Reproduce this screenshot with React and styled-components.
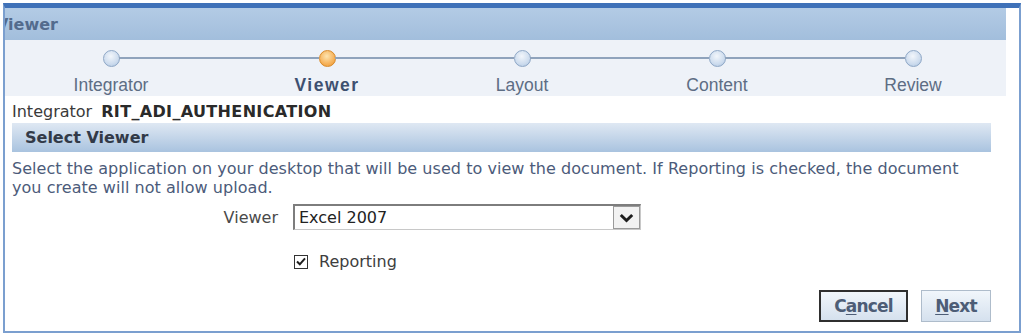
import React from "react";
import styled, { createGlobalStyle } from "styled-components";

const GlobalStyle = createGlobalStyle`
  html, body { margin: 0; padding: 0; background: #ffffff; }
  body { font-family: "DejaVu Sans", Verdana, sans-serif; }
  * { box-sizing: border-box; }
`;

// -------------------- FRAME --------------------
const Frame = styled.div`
  margin: 3px 0 0 3px;
  width: 1018px;
  height: 330px;
  border-left: 2px solid #7b9fcf;
  border-right: 2px solid #7b9fcf;
  border-bottom: 2px solid #7b9fcf;
  border-top: 5px solid #3f71b8;
  display: flex;
  flex-direction: column;
`;

const Header = styled.div`
  height: 32px;
  margin-right: 13px;
  background: linear-gradient(#b3cbe5, #a2bedc);
  overflow: hidden;
  display: flex;
  align-items: center;
`;

const HeaderTitle = styled.span`
  margin-left: -9px;
  font-family: "DejaVu Sans", Verdana, sans-serif;
  font-weight: bold;
  font-size: 16px;
  color: #536b8d;
`;

// -------------------- TRAIN --------------------
const Train = styled.div`
  height: 56px;
  margin-right: 13px;
  background: #eef2f8;
  display: flex;
  align-items: flex-start;
  padding: 10px 0 0 98px;
`;

const Step = styled.div`
  width: 16px;
  flex-shrink: 0;
  display: flex;
  flex-direction: column;
  align-items: center;
`;

const Dot = styled.span`
  width: 17px;
  height: 17px;
  border-radius: 50%;
  border: 1px solid ${(p) => (p.$active ? "#d88a2a" : "#8ea7c6")};
  background: ${(p) =>
    p.$active
      ? "radial-gradient(circle at 45% 35%, #fde4b0, #f6b25a 60%, #e9952f)"
      : "radial-gradient(circle at 45% 35%, #f2f6fb, #cddcee 60%, #aac2de)"};
`;

const StepLabel = styled.span`
  margin-top: 8px;
  white-space: nowrap;
  font-family: "Liberation Sans", Arial, sans-serif;
  font-size: 17.5px;
  line-height: 20px;
  color: ${(p) => (p.$active ? "#3d5070" : "#5d6d84")};
  font-weight: ${(p) => (p.$active ? "bold" : "normal")};
  letter-spacing: ${(p) => (p.$active ? "1.5px" : "0")};
`;

const Connector = styled.span`
  flex-shrink: 0;
  width: ${(p) => p.$w}px;
  height: 2px;
  margin-top: 7px;
  background: #8fa3bc;
`;

// -------------------- CONTENT --------------------
const Content = styled.div`
  padding: 0 28px 0 7px;
  display: flex;
  flex-direction: column;
`;

const InfoRow = styled.div`
  margin-top: 4px;
  height: 22px;
  display: flex;
  align-items: center;
  gap: 9px;
  font-size: 16px;
  color: #3a3a3a;
`;

const InfoValue = styled.b`
  color: #2a2a2a;
  letter-spacing: 0.35px;
`;

const SectionBar = styled.div`
  margin-top: 1px;
  height: 29px;
  background: linear-gradient(#dfe8f3, #a9c3df);
  display: flex;
  align-items: center;
  padding-left: 13px;
  font-weight: bold;
  font-size: 16px;
  color: #323a48;
`;

const Description = styled.p`
  margin: 7px 0 0;
  width: 960px;
  font-size: 16px;
  letter-spacing: 0.04px;
  line-height: 19px;
  color: #4c5b7a;
`;

const FieldRow = styled.div`
  margin-top: 7px;
  display: flex;
  align-items: center;
`;

const FieldLabel = styled.span`
  width: 281px;
  padding-right: 15px;
  text-align: right;
  font-size: 16px;
  color: #4a4a4a;
`;

const SelectBox = styled.div`
  width: 348px;
  height: 26px;
  display: flex;
  border-top: 2px solid #7d7d7d;
  border-left: 2px solid #7d7d7d;
  border-right: 1px solid #c8c8c8;
  border-bottom: 1px solid #c8c8c8;
  background: #ffffff;
`;

const SelectValue = styled.span`
  flex: 1;
  padding-left: 4px;
  display: flex;
  align-items: center;
  font-size: 16px;
  color: #222;
`;

const SelectButton = styled.span`
  width: 27px;
  display: flex;
  align-items: center;
  justify-content: center;
  background: #f2f2f2;
  border: 1px solid #9a9a9a;
`;

const CheckRow = styled.label`
  margin-top: 22px;
  margin-left: 282px;
  display: flex;
  align-items: center;
  gap: 11px;
  font-size: 16px;
  color: #3e3e3e;
`;

const CheckBox = styled.span`
  width: 14px;
  height: 14px;
  border: 1px solid #333;
  background: #fff;
  display: flex;
  align-items: center;
  justify-content: center;
`;

const ButtonRow = styled.div`
  margin-top: 19px;
  display: flex;
  justify-content: flex-end;
  gap: 13px;
`;

const Button = styled.button`
  height: 32px;
  width: ${(p) => p.$w}px;
  padding: 0;
  border: ${(p) => (p.$focused ? "2px solid #2f2f2f" : "1px solid #aebccb")};
  background: linear-gradient(#f1f6fb, #d5e1ee);
  font-family: "DejaVu Sans", Verdana, sans-serif;
  font-weight: bold;
  font-size: 17px;
  letter-spacing: -0.8px;
  color: #4d5d76;
  cursor: pointer;

  u { text-decoration-thickness: 1px; text-underline-offset: 2px; }
`;

const steps = [
  { label: "Integrator" },
  { label: "Viewer", active: true },
  { label: "Layout" },
  { label: "Content" },
  { label: "Review" },
];
const gaps = [200, 179, 179, 180];

export default function App() {
  return (
    <>
      <GlobalStyle />
      <Frame>
        <Header>
          <HeaderTitle>Viewer</HeaderTitle>
        </Header>

        <Train>
          {steps.map((s, i) => (
            <React.Fragment key={s.label}>
              <Step>
                <Dot $active={s.active} />
                <StepLabel $active={s.active}>{s.label}</StepLabel>
              </Step>
              {i < gaps.length && <Connector $w={gaps[i]} />}
            </React.Fragment>
          ))}
        </Train>

        <Content>
          <InfoRow>
            Integrator <InfoValue>RIT_ADI_AUTHENICATION</InfoValue>
          </InfoRow>

          <SectionBar>Select Viewer</SectionBar>

          <Description>
            Select the application on your desktop that will be used to view the document. If Reporting is checked, the document
            you create will not allow upload.
          </Description>

          <FieldRow>
            <FieldLabel>Viewer</FieldLabel>
            <SelectBox>
              <SelectValue>Excel 2007</SelectValue>
              <SelectButton>
                <svg width="15" height="10" viewBox="0 0 15 10">
                  <polyline points="1.8,2 7.5,7.5 13.2,2" fill="none" stroke="#1e1e1e" strokeWidth="3" />
                </svg>
              </SelectButton>
            </SelectBox>
          </FieldRow>

          <CheckRow>
            <CheckBox>
              <svg width="10" height="9" viewBox="0 0 10 9">
                <polyline points="1,4.5 3.8,7.3 9,1.3" fill="none" stroke="#1e1e1e" strokeWidth="2" />
              </svg>
            </CheckBox>
            Reporting
          </CheckRow>

          <ButtonRow>
            <Button $w={89} $focused>
              C<u>a</u>ncel
            </Button>
            <Button $w={70}>
              <u>N</u>ext
            </Button>
          </ButtonRow>
        </Content>
      </Frame>
    </>
  );
}
